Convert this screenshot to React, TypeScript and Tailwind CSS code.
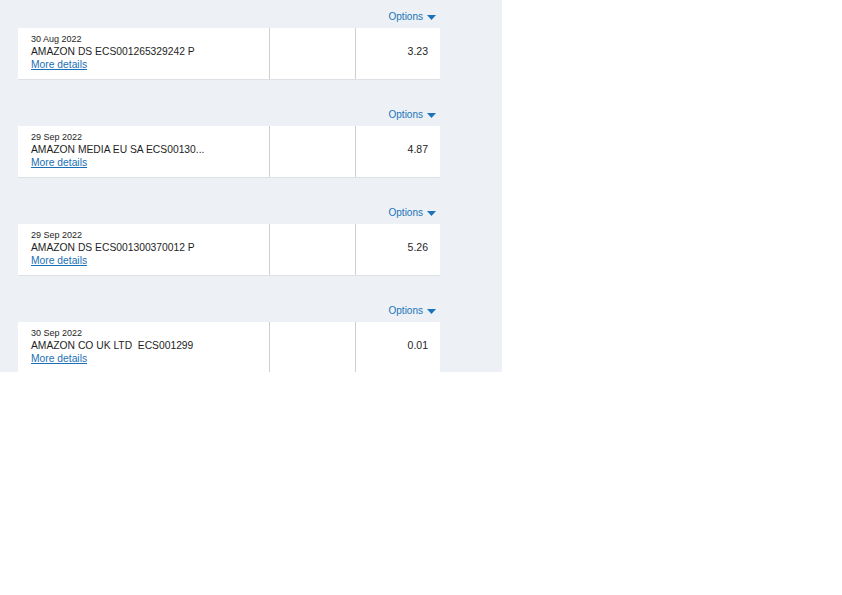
const rows = [
  { date: "30 Aug 2022", name: "AMAZON DS ECS001265329242 P", amount: "3.23" },
  { date: "29 Sep 2022", name: "AMAZON MEDIA EU SA ECS00130...", amount: "4.87" },
  { date: "29 Sep 2022", name: "AMAZON DS ECS001300370012 P", amount: "5.26" },
  { date: "30 Sep 2022", name: "AMAZON CO UK LTD  ECS001299", amount: "0.01" },
];

function Caret() {
  return (
    <svg width="9" height="5" viewBox="0 0 9 5" className="ml-[4px]">
      <path d="M0 0h9L4.5 5z" fill="#1a73ba" />
    </svg>
  );
}

export default function App() {
  return (
    <div className="w-[842px] h-[595px] bg-white font-['Liberation_Sans',Arial,sans-serif]">
      <div className="w-[502px] h-[372px] overflow-hidden bg-[#edf1f5] pt-[10px] pl-[18px]">
        <div className="w-[422px] flex flex-col gap-[28px]">
          {rows.map((r, i) => (
            <div key={i} className="flex flex-col">
              {/* options link above each transaction */}
              <div className="h-[14px] mb-[4px] flex items-center justify-end pr-[4px]">
                <span className="text-[10px] leading-none text-[#1a73ba]">Options</span>
                <Caret />
              </div>
              <div className="h-[52px] bg-white border-b border-[#dde1e5] flex">
                <div className="w-[251px] pl-[13px] pt-[5px] flex flex-col text-[#1e1e1e]">
                  <span className="text-[9px] leading-[12px]">{r.date}</span>
                  <span className="text-[10.3px] leading-[13px] whitespace-pre">{r.name}</span>
                  <a className="text-[10.3px] leading-[14px] text-[#1a6fb5] underline w-fit">More details</a>
                </div>
                <div className="w-[86px] border-l border-[#cfcfcf]" />
                <div className="flex-1 border-l border-[#cfcfcf] flex justify-end pr-[12px] pt-[17px]">
                  <span className="text-[10.5px] leading-[13px] text-[#1e1e1e]">{r.amount}</span>
                </div>
              </div>
            </div>
          ))}
        </div>
      </div>
    </div>
  );
}
